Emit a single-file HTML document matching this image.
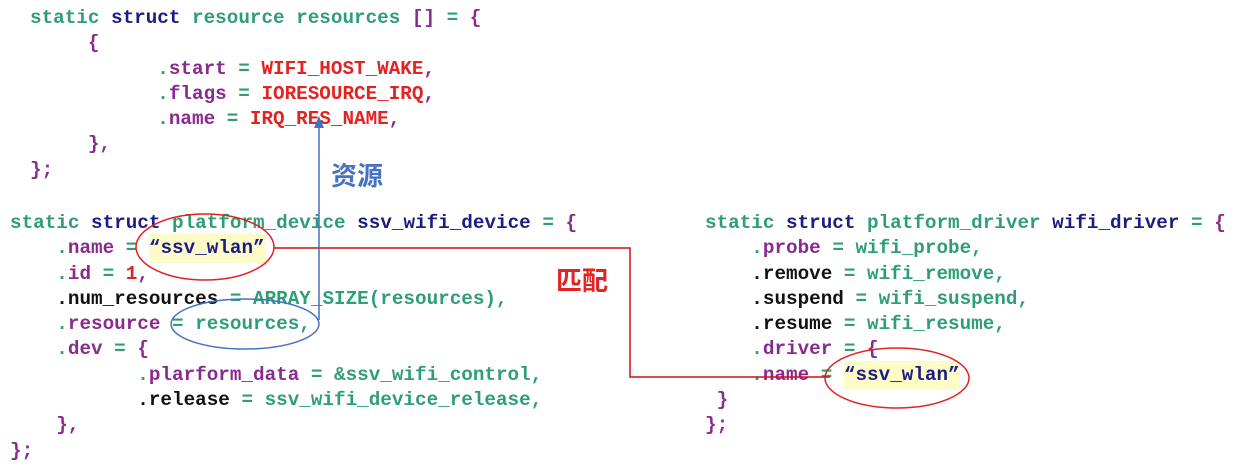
<!DOCTYPE html>
<html><head><meta charset="utf-8"><style>
body{margin:0;width:1239px;height:473px;background:#fff;position:relative;overflow:hidden}
pre{position:absolute;margin:0;font-family:"Liberation Mono",monospace;font-weight:bold;font-size:19.3px;line-height:25.3px;color:#111}
.g{color:#2f9e74}.n{color:#1c1c84}.p{color:#8a2a8e}.r{color:#e32222}.k{color:#111}
.hl{background:#fdfbc8;padding:3px 0 4px}
.cj{position:absolute;font-family:"Noto Sans CJK SC",sans-serif;font-weight:bold;font-size:26px}
</style></head><body>
<pre style="left:30px;top:6px"><span class="g">static</span> <span class="n">struct</span> <span class="g">resource resources</span> <span class="p">[]</span> <span class="g">=</span> <span class="p">{</span>
     <span class="p">{</span>
           <span class="g">.</span><span class="p">start</span> <span class="g">=</span> <span class="r">WIFI_HOST_WAKE</span><span class="p">,</span>
           <span class="g">.</span><span class="p">flags</span> <span class="g">=</span> <span class="r">IORESOURCE_IRQ</span><span class="p">,</span>
           <span class="g">.</span><span class="p">name</span> <span class="g">=</span> <span class="r">IRQ_RES_NAME</span><span class="p">,</span>
     <span class="p">},</span>
<span class="p">};</span></pre>
<pre style="left:10px;top:211px"><span class="g">static</span> <span class="n">struct</span> <span class="g">platform_device</span> <span class="n">ssv_wifi_device</span> <span class="g">=</span> <span class="p">{</span>
    <span class="g">.</span><span class="p">name</span> <span class="g">=</span> <span class="hl n">“ssv_wlan”</span>
    <span class="g">.</span><span class="p">id</span> <span class="g">=</span> <span class="r">1</span><span class="p">,</span>
    <span class="k">.num_resources</span> <span class="g">= ARRAY_SIZE(resources),</span>
    <span class="g">.</span><span class="p">resource</span> <span class="g">= resources,</span>
    <span class="g">.</span><span class="p">dev</span> <span class="g">=</span> <span class="p">{</span>
           <span class="g">.</span><span class="p">plarform_data</span> <span class="g">= &amp;ssv_wifi_control,</span>
           <span class="k">.release</span> <span class="g">= ssv_wifi_device_release,</span>
    <span class="p">},</span>
<span class="p">};</span></pre>
<pre style="left:705px;top:211px"><span class="g">static</span> <span class="n">struct</span> <span class="g">platform_driver</span> <span class="n">wifi_driver</span> <span class="g">=</span> <span class="p">{</span>
    <span class="g">.</span><span class="p">probe</span> <span class="g">= wifi_probe,</span>
    <span class="k">.remove</span> <span class="g">= wifi_remove,</span>
    <span class="k">.suspend</span> <span class="g">= wifi_suspend,</span>
    <span class="k">.resume</span> <span class="g">= wifi_resume,</span>
    <span class="g">.</span><span class="p">driver</span> <span class="g">=</span> <span class="p">{</span>
    <span class="g">.</span><span class="p">name</span> <span class="g">=</span> <span class="hl n">“ssv_wlan”</span>
 <span class="p">}</span>
<span class="p">};</span></pre>
<div class="cj" style="left:331px;top:156px;color:#4472c4">资源</div>
<div class="cj" style="left:556px;top:261px;color:#e32222">匹配</div>
<svg width="1239" height="473" style="position:absolute;left:0;top:0">
<ellipse cx="205" cy="247" rx="69" ry="33" fill="none" stroke="#e32222" stroke-width="1.5"/>
<ellipse cx="897" cy="378" rx="72" ry="30" fill="none" stroke="#e32222" stroke-width="1.5"/>
<ellipse cx="245" cy="324" rx="74" ry="25" fill="none" stroke="#4472c4" stroke-width="1.5"/>
<polyline points="274,248 630,248 630,377 830,377" fill="none" stroke="#d01010" stroke-width="1.5"/>
<line x1="319" y1="320" x2="319" y2="125" stroke="#4472c4" stroke-width="1.5"/>
<polygon points="314,128 319,116 324,128" fill="#4472c4"/>
</svg>
</body></html>
